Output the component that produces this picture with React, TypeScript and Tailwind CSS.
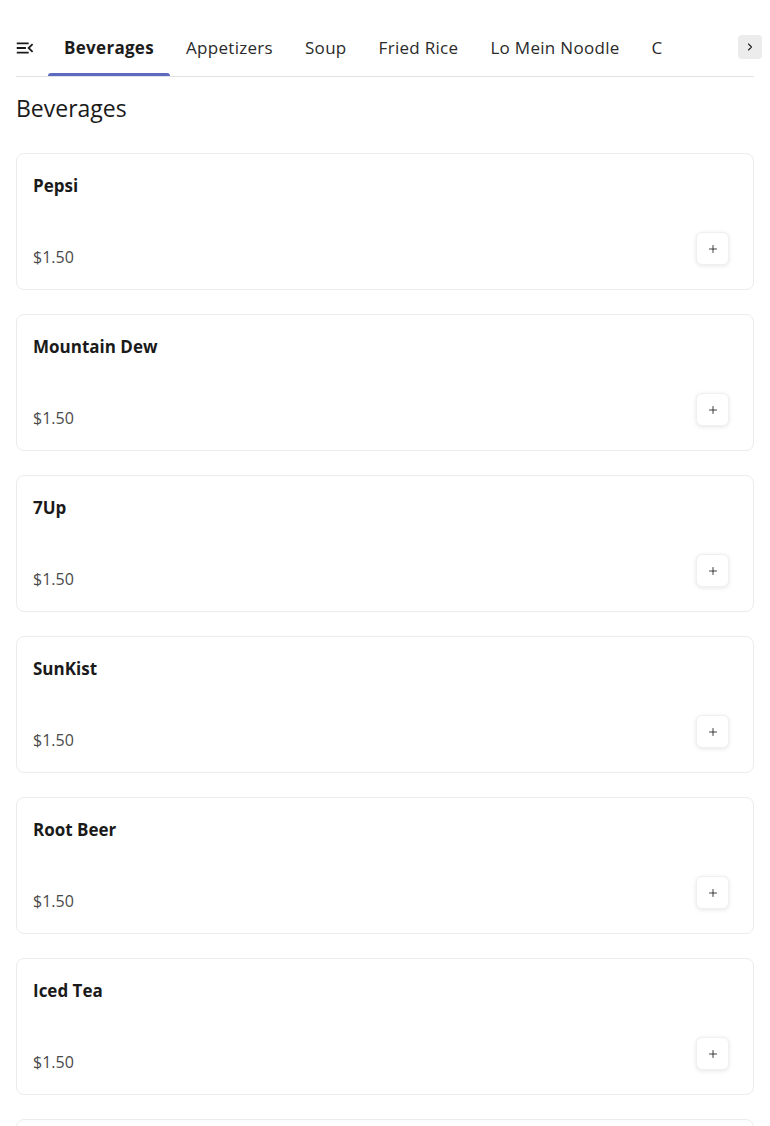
import React from 'react';
import { MdMenuOpen } from 'react-icons/md';
import { ChevronRight, Plus } from 'lucide-react';

const TABS = ['Beverages', 'Appetizers', 'Soup', 'Fried Rice', 'Lo Mein Noodle', 'Chow Mein', 'Chop Suey'];

const ITEMS = [
  { name: 'Pepsi', price: '$1.50' },
  { name: 'Mountain Dew', price: '$1.50' },
  { name: '7Up', price: '$1.50' },
  { name: 'SunKist', price: '$1.50' },
  { name: 'Root Beer', price: '$1.50' },
  { name: 'Iced Tea', price: '$1.50' },
  { name: 'Bottled Water', price: '$1.50' },
];

const font = { fontFamily: '"Open Sans", "Liberation Sans", sans-serif' };

export default function App() {
  return (
    <div className="min-h-screen bg-white text-[#1c1c1c]" style={font}>
      <div className="px-4">
        {/* Category tabs */}
        <nav className="relative flex items-end pt-5 border-b border-[#e2e2e2]">
          <button className="h-14 flex items-center -ml-[2px] pr-[12px] text-[#1a1a1a]">
            <MdMenuOpen className="w-[22px] h-[22px]" />
          </button>
          <div className="flex overflow-hidden w-[614px]">
            {TABS.map((t, i) => (
              <div
                key={t}
                className={`relative shrink-0 h-14 px-4 flex items-center text-[17px] tracking-[0.3px] whitespace-nowrap ${
                  i === 0 ? 'font-bold text-[#1c1c1c]' : 'text-[#2a2a2a]'
                }`}
              >
                {t}
                {i === 0 && (
                  <span className="absolute left-0 right-0 bottom-0 h-[3px] rounded-t bg-[#5b6abf]" />
                )}
              </div>
            ))}
          </div>
          <button className="absolute -right-2 top-[35px] w-6 h-6 rounded bg-[#ececec] flex items-center justify-center text-[#222]">
            <ChevronRight className="w-3 h-3" strokeWidth={2.25} />
          </button>
        </nav>

        <h2 className="mt-[15px] mb-[29px] text-[23px] leading-8 font-medium text-[#1a1a1a]">Beverages</h2>

        <div className="flex flex-col gap-6 pb-6">
          {ITEMS.map((item) => (
            <div
              key={item.name}
              className="h-[137px] rounded-lg border border-[#ececec] pl-4 pr-6 pt-5 pb-5 flex flex-col justify-between"
            >
              <div className="text-[17px] leading-6 font-bold text-[#1a1a1a]">{item.name}</div>
              <div className="flex items-end justify-between">
                <span className="text-[16px] leading-6 text-[#4a4a4a]">{item.price}</span>
                <button className="mb-1 w-[33px] h-[33px] rounded-md bg-white border border-[#f0f0f0] shadow-[0_1px_4px_rgba(0,0,0,0.1)] flex items-center justify-center text-[#222]">
                  <Plus className="w-3 h-3" strokeWidth={1.75} />
                </button>
              </div>
            </div>
          ))}
        </div>
      </div>
    </div>
  );
}
